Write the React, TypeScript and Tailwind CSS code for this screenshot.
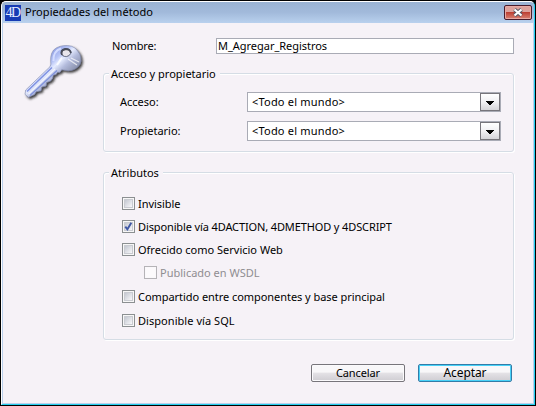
import type { ReactNode } from "react";

function Group({ title, className, children }: { title: ReactNode; className: string; children: ReactNode }) {
  return (
    <section className={`relative rounded-[3px] border border-[#d5dde5] shadow-[inset_1px_1px_0_#fff,1px_1px_0_#fff] ${className}`}>
      <h2 className="absolute -top-[8px] left-[5px] bg-[#f6f2f7] pr-[4px] pl-[2px] leading-[15px]">{title}</h2>
      {children}
    </section>
  );
}

function SelectRow({ label }: { label: string }) {
  return (
    <div className="flex h-[20px] items-center">
      <span className="w-[127px]">{label}</span>
      <div className="flex h-[20px] w-[254px] items-center border border-[#a9abb5] bg-white pl-[4px]">
        <span className="flex-1 tracking-[0.2px]">&lt;Todo el mundo&gt;</span>
        <span className="flex h-[18px] w-[20px] items-center justify-center border border-[#77757b] bg-linear-to-b from-white via-[#f1f0f3] to-[#d5d4d8]">
          <svg className="mt-px" width="8" height="4" viewBox="0 0 8 4" shapeRendering="crispEdges">
            <path d="M0 0H8L4.5 4H3.5Z" fill="#000" />
          </svg>
        </span>
      </div>
    </div>
  );
}

function Check({ label, checked = false, disabled = false, className }: { label: string; checked?: boolean; disabled?: boolean; className: string }) {
  return (
    <label className={`flex h-[13px] items-center whitespace-nowrap ${disabled ? "text-[#8f8d91]" : ""} ${className}`}>
      <span className={`mr-[3px] flex size-[13px] shrink-0 border p-px ${disabled ? "border-[#b5b3b7] bg-[#faf8fb]" : "border-[#8b8f91] bg-[#f7f7f7]"}`}>
        <span className={`flex size-[9px] ${disabled ? "bg-[#fcfafc]" : "border border-[#c9cbd1] bg-linear-to-br from-[#c4c8d1] to-[#f8f8fa]"}`}>
          {checked && (
            <svg className="-m-px shrink-0" width="9" height="9" viewBox="0 0 9 9">
              <path d="M1.3 4.6L3.4 7.3L7.3 .8" fill="none" stroke="#4058a5" strokeWidth="1.9" />
            </svg>
          )}
        </span>
      </span>
      <span className="leading-[15px]">{label}</span>
    </label>
  );
}

function KeyIcon() {
  return (
    <svg width="66" height="60" viewBox="0 0 66 60">
      <defs>
        <linearGradient id="keyBody" gradientUnits="userSpaceOnUse" x1="22" y1="12" x2="44" y2="36">
          <stop offset="0" stopColor="#8d9de4" />
          <stop offset=".3" stopColor="#b7c4f6" />
          <stop offset=".45" stopColor="#e6ecff" />
          <stop offset=".65" stopColor="#b3bbdc" />
          <stop offset="1" stopColor="#848ba5" />
        </linearGradient>
        <filter id="keyShadow" x="-20%" y="-20%" width="150%" height="150%">
          <feDropShadow dx="1.7" dy="1.8" stdDeviation="1.1" floodColor="#26262c" floodOpacity=".9" />
        </filter>
      </defs>
      <g filter="url(#keyShadow)">
        <path
          fillRule="evenodd"
          d="M30.7 8.3Q32 4.5 35.7 2.7Q39 1 42.3 .7Q47 .2 50.7 1.3Q55 3 56.7 6Q59.5 9 59.7 12.7Q60.5 16 59 19.3Q57 22.5 54 24Q51 25.7 47.3 25.7L40.7 24.7L39 27.3H36.5L35 29.5L32.3 30L31.5 33.5L29.5 36L25.5 37.5L25 41L20.7 42L20 45.7L15 46.8L13.5 49.5L7.3 52.3L4 49.3L4.7 45L29 21.7Q30.5 19 29.7 16.7Q29.3 12 30.7 8.3ZM40 7.7A5 4 0 1 0 50 7.7A5 4 0 1 0 40 7.7Z"
          fill="url(#keyBody)"
          stroke="#7d86aa"
          strokeWidth=".6"
        />
      </g>
      <path d="M6 46.5L31 22.5" stroke="#7f92e2" strokeWidth="1.6" />
      <path d="M7.5 49L34 24" stroke="#f0f3ff" strokeWidth="1.4" />
      <path d="M9 50.5L36 25.5" stroke="#8193dc" strokeWidth="1.3" />
      <path d="M32.5 16Q32 6 40 3.5" fill="none" stroke="#d3dcff" strokeWidth="2" />
      <path d="M36 20L41 12.5" stroke="#f8faff" strokeWidth="2" />
      <path d="M47 14L56 20M50 13L58 17" stroke="#fff" strokeOpacity=".7" strokeWidth="1.3" />
      <ellipse cx="45" cy="8.2" rx="3.8" ry="3" fill="#e9e6ec" />
      <path d="M41 10Q39 5 44 4Q49 3.5 50 8" fill="none" stroke="#484c5b" strokeWidth="1.8" />
      <path d="M41 10Q46 14 50 8" fill="none" stroke="#747a90" strokeWidth="1" />
    </svg>
  );
}

export default function App() {
  return (
    <div className="h-[406px] w-[536px] bg-black p-px font-['Noto_Sans',sans-serif] text-[11px] text-black">
      <div className="flex h-[404px] w-[534px] flex-col overflow-hidden rounded-t-[5px] border-x border-t border-b border-t-white border-r-[#22cfee] border-b-[#22cfee] border-l-white bg-[#f6f2f7]">
        <header className="flex h-[21px] shrink-0 items-center bg-linear-to-b from-[#9ab3d3] via-[#a2badb] to-[#b9d1ee] pr-[2px] pl-[3px]">
          <span className="flex h-[16px] w-[16px] items-center justify-center overflow-hidden bg-[#163bb4] pr-px font-['Liberation_Serif',serif] text-[14px] leading-[16px] tracking-[-1.5px] text-[#e4ebff]">4D</span>
          <span className="ml-[4px] flex-1 tracking-[0.06px]">Propiedades del método</span>
          <span className="flex h-[15px] w-[28px] items-center justify-center rounded-[2px] border border-[#481c2b] bg-linear-to-b from-[#dda29c] from-45% via-[#bd4034] via-50% to-[#d98174] shadow-[inset_0_0_0_1px_#e8a9a3]">
            <svg width="12" height="9" viewBox="0 0 12 9">
              <path d="M2.5 1.5L9.5 7.5M9.5 1.5L2.5 7.5" stroke="#555766" strokeWidth="4" />
              <path d="M2.5 1.5L9.5 7.5M9.5 1.5L2.5 7.5" stroke="#fff" strokeWidth="2.2" />
            </svg>
          </span>
        </header>
        <main className="flex flex-1 border-r border-b border-l border-[#b9cfeb]">
          <aside className="w-[100px] pt-[22px] pl-[18px]">
            <KeyIcon />
          </aside>
          <div className="w-[411px] pt-[15px]">
            <div className="flex h-[16px] items-center">
              <span className="w-[113px] pl-[9px] tracking-[-0.2px]">Nombre:</span>
              <div className="flex h-[16px] w-[298px] items-center border border-[#a9abb5] bg-white pl-px tracking-[-0.03px]">M_Agregar_Registros</div>
            </div>
            <Group title="Acceso y propietario" className="mt-[19px] h-[79px] pt-[18px] pl-[16px]">
              <div className="flex flex-col gap-[9px]">
                <SelectRow label="Acceso:" />
                <SelectRow label="Propietario:" />
              </div>
            </Group>
            <Group title="Atributos" className="mt-[20px] h-[168px] pt-[24px] pl-[18px]">
              <Check label="Invisible" className="tracking-[-0.05px]" />
              <Check label="Disponible vía 4DACTION, 4DMETHOD y 4DSCRIPT" checked className="mt-[10px] tracking-[-0.12px]" />
              <Check label="Ofrecido como Servicio Web" className="mt-[10px]" />
              <Check label="Publicado en WSDL" disabled className="mt-[10px] ml-[22px]" />
              <Check label="Compartido entre componentes y base principal" className="mt-[11px] tracking-[-0.05px]" />
              <Check label="Disponible vía SQL" className="mt-[11px] tracking-[0.05px]" />
            </Group>
            <div className="mt-[24px] flex justify-end gap-[13px] pr-[2px]">
              <button className="flex h-[18px] w-[94px] items-center justify-center rounded-[2px] border border-[#77757b] bg-linear-to-b from-[#f8f7f9] from-45% via-[#e4e2e6] via-50% to-[#cfcdd2] tracking-[-0.1px] shadow-[inset_0_0_0_1px_#fbfafc]">Cancelar</button>
              <button className="flex h-[18px] w-[94px] items-center justify-center rounded-[2px] border border-[#337ca8] bg-linear-to-b from-[#f8f7f9] from-45% via-[#e4e2e6] via-50% to-[#cfcdd2] text-[12px] tracking-[-0.1px] shadow-[inset_0_0_0_1px_#48d2f8]">Aceptar</button>
            </div>
          </div>
        </main>
      </div>
    </div>
  );
}
